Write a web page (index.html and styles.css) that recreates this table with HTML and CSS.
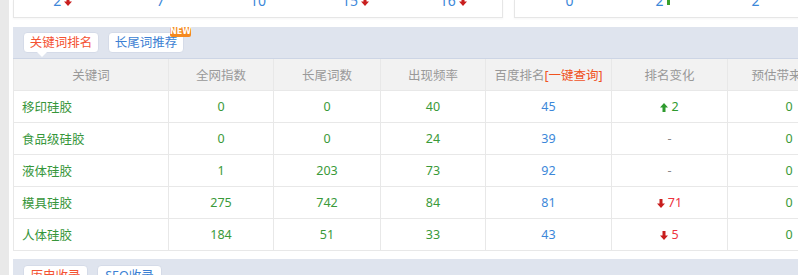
FILE: index.html
```html
<!DOCTYPE html>
<html lang="zh">
<head>
<meta charset="utf-8">
<link rel="stylesheet" href="styles.css">
</head>
<body>
<div class="page">
  <div class="side"></div>
  <div class="main">
    <div class="stats">
      <div class="card card-left">
        <div class="stat"><span class="num">2</span><svg class="arr" viewBox="0 0 8 9"><path d="M2.5 0h3v4.5H8L4 9 0 4.5h2.5z" fill="#c81e1e"/></svg></div>
        <div class="stat"><span class="num">7</span></div>
        <div class="stat"><span class="num">10</span></div>
        <div class="stat"><span class="num">15</span><svg class="arr" viewBox="0 0 8 9"><path d="M2.5 0h3v4.5H8L4 9 0 4.5h2.5z" fill="#c81e1e"/></svg></div>
        <div class="stat"><span class="num">16</span><svg class="arr" viewBox="0 0 8 9"><path d="M2.5 0h3v4.5H8L4 9 0 4.5h2.5z" fill="#c81e1e"/></svg></div>
      </div>
      <div class="card card-right">
        <div class="stat rs"><span class="num">0</span></div>
        <div class="stat rs"><span class="num">2</span><span class="gbar"></span></div>
        <div class="stat rs"><span class="num">2</span></div>
      </div>
    </div>

    <section class="panel">
      <div class="tabs">
        <span class="tab active">关键词排名</span>
        <span class="tab blue">长尾词推荐<span class="badge">NEW</span></span>
      </div>
      <table class="grid">
        <colgroup>
          <col class="c1"><col class="c2"><col class="c3"><col class="c4"><col class="c5"><col class="c6"><col class="c7">
        </colgroup>
        <thead>
          <tr><th>关键词</th><th>全网指数</th><th>长尾词数</th><th>出现频率</th><th>百度排名<span class="query">[一键查询]</span></th><th>排名变化</th><th>预估带来流量</th></tr>
        </thead>
        <tbody>
          <tr><td class="kw">移印硅胶</td><td class="g">0</td><td class="g">0</td><td class="g">40</td><td class="b">45</td><td class="up"><svg class="arr" viewBox="0 0 8 9"><path d="M2.5 9h3V4.5H8L4 0 0 4.5h2.5z" fill="#2e9a2e"/></svg>2</td><td class="g">0</td></tr>
          <tr><td class="kw">食品级硅胶</td><td class="g">0</td><td class="g">0</td><td class="g">24</td><td class="b">39</td><td class="dash">-</td><td class="g">0</td></tr>
          <tr><td class="kw">液体硅胶</td><td class="g">1</td><td class="g">203</td><td class="g">73</td><td class="b">92</td><td class="dash">-</td><td class="g">0</td></tr>
          <tr><td class="kw">模具硅胶</td><td class="g">275</td><td class="g">742</td><td class="g">84</td><td class="b">81</td><td class="down"><svg class="arr" viewBox="0 0 8 9"><path d="M2.5 0h3v4.5H8L4 9 0 4.5h2.5z" fill="#c81e1e"/></svg>71</td><td class="g">0</td></tr>
          <tr><td class="kw">人体硅胶</td><td class="g">184</td><td class="g">51</td><td class="g">33</td><td class="b">43</td><td class="down"><svg class="arr" viewBox="0 0 8 9"><path d="M2.5 0h3v4.5H8L4 9 0 4.5h2.5z" fill="#c81e1e"/></svg>5</td><td class="g">0</td></tr>
        </tbody>
      </table>
    </section>

    <section class="panel panel2">
      <div class="tabs">
        <span class="tab active small">历史收录</span>
        <span class="tab blue small">SEO收录</span>
      </div>
    </section>
  </div>
</div>
</body>
</html>
```

FILE: styles.css
```css
html, body {
  margin: 0;
  padding: 0;
  background: #ffffff;
  overflow: hidden;
}
body {
  font-family: "Noto Sans", "Noto Sans CJK SC", sans-serif;
  font-size: 12px;
  width: 798px;
  height: 275px;
}
.page {
  display: flex;
  gap: 4px;
  height: 275px;
}
.side {
  width: 9px;
  flex: none;
  background: #e9e9e9;
}
.main {
  width: 860px;
  flex: none;
}
.stats {
  display: flex;
  gap: 11px;
  height: 18px;
}
.card {
  display: flex;
  box-sizing: border-box;
  height: 18px;
  border: 1px solid #e6e6e6;
  border-top: none;
  background: #fff;
  box-shadow: 0 1px 2px rgba(0,0,0,0.04);
}
.card-left { width: 490px; }
.card-right { width: 330px; }
.stat {
  width: 98px;
  display: flex;
  justify-content: center;
  align-items: center;
  gap: 3px;
  height: 10px;
  margin-top: -4px;
  color: #3c87d9;
  font-size: 14px;
}
.stat .num { line-height: 10px; }
.rs { width: 93px; }
.rs:first-child { margin-left: 8px; }
.gbar {
  display: inline-block;
  width: 3px;
  height: 9px;
  background: #3aa02a;
  margin-top: -2px;
}
.arr {
  width: 8px;
  height: 9px;
  flex: none;
}
.panel {
  margin-top: 9px;
  background: #fff;
}
.tabs {
  position: relative;
  display: flex;
  gap: 9px;
  height: 32px;
  box-sizing: border-box;
  padding: 5px 0 0 10px;
  background: #dfe4ee;
  border-bottom: 1px solid #cdd5e5;
}
.tab {
  position: relative;
  box-sizing: border-box;
  width: 76px;
  height: 21px;
  line-height: 19px;
  text-align: center;
  background: #fff;
  border: 1px solid #d5dbe8;
  border-radius: 4px;
  color: #f45232;
  font-size: 12.5px;
}
.tab.small { width: 65px; }
.tab.blue { color: #3c7fd3; }
.tab.active::after {
  content: "";
  position: absolute;
  left: 13px;
  bottom: -5px;
  border-left: 5px solid transparent;
  border-right: 5px solid transparent;
  border-top: 5px solid #fff;
}
.panel2 .tab.active::after { display: none; }
.badge {
  position: absolute;
  right: -8px;
  top: -6px;
  width: 21px;
  height: 10px;
  line-height: 10px;
  text-align: center;
  background: #f5891f;
  color: #fff;
  font-size: 8px;
  font-weight: bold;
  border-radius: 2px;
  font-family: "DejaVu Sans", sans-serif;
}
.grid {
  border-collapse: collapse;
  table-layout: fixed;
  width: 837px;
}
.c1 { width: 155px; }
.c2 { width: 105px; }
.c3 { width: 107px; }
.c4 { width: 105px; }
.c5 { width: 126px; }
.c6 { width: 116px; }
.c7 { width: 123px; }
.grid th, .grid td {
  border: 1px solid #e8e8e8;
  padding: 0;
  text-align: center;
  font-weight: normal;
  white-space: nowrap;
  overflow: hidden;
}
.grid th {
  height: 31px;
  background: #f2f2f2;
  color: #999;
  font-size: 12.5px;
}
.grid thead tr th { border-top: none; }
.grid td {
  height: 31px;
  font-size: 12.5px;
}
.query { color: #f0531f; }
.kw { text-align: left !important; padding-left: 8px !important; color: #36963a; }
.g { color: #3a9a3a; }
.b { color: #3c87d9; }
.dash { color: #888; }
.up { color: #2e9a2e; }
.down { color: #ee3340; }
.up .arr, .down .arr { margin-right: 3px; vertical-align: -1px; }
.panel2 { margin-top: 8px; }
.panel2 .tabs { padding-top: 6px; }
```
